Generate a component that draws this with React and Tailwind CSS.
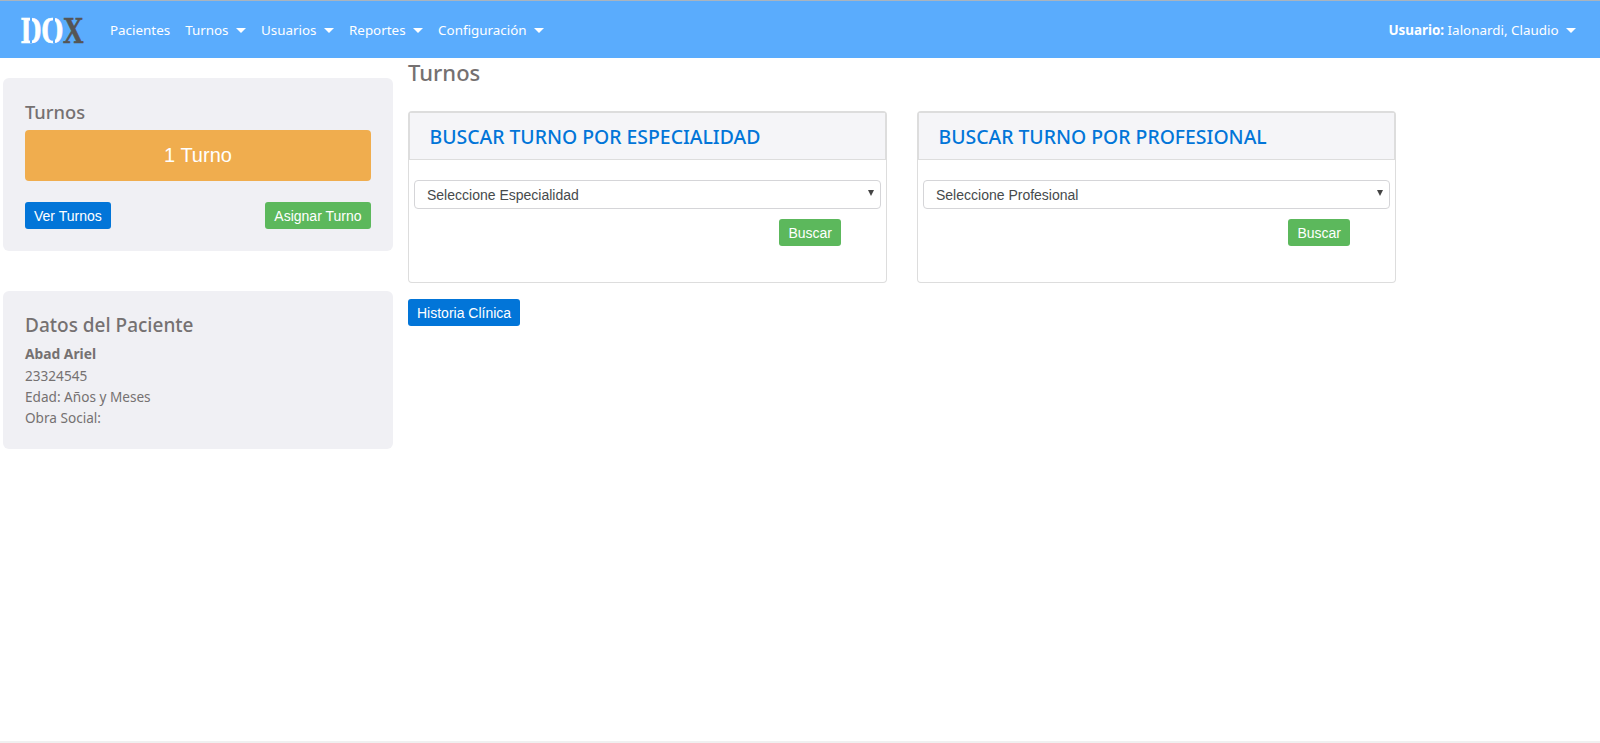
import React from "react";

const sans = "font-['Noto_Sans','Open_Sans',sans-serif]";
const arial = "font-['Liberation_Sans',Arial,sans-serif]";

function Caret() {
  return <span className="ml-[7.5px] inline-block w-0 h-0 border-x-[5px] border-x-transparent border-t-[5px] border-t-white align-middle" />;
}

function NavItem({ label, caret }) {
  return (
    <span className="text-[13.4px] leading-[20px] text-white whitespace-nowrap">
      {label}
      {caret && <Caret />}
    </span>
  );
}

function Btn({ children, color, wide }) {
  return (
    <button className={`${arial} ${color} ${wide ? "px-[9.5px]" : "px-[9px]"} h-[27px] rounded-[3px] text-[14px] leading-[20px] text-white whitespace-nowrap`}>
      {children}
    </button>
  );
}

function SearchPanel({ title, placeholder }) {
  return (
    <section className="w-[479px] h-[172px] rounded-[4px] border border-[#dddddd] border-t-2 bg-white flex flex-col">
      <header className="h-[47px] shrink-0 bg-[#f5f5f8] border-b border-x border-[#dddddd] pl-[19.5px] pt-[2px] flex items-center">
        <h2 className="text-[19.4px] leading-[24px] font-medium text-[#0275d8] whitespace-nowrap">{title}</h2>
      </header>
      <div className="px-[5px] pt-[20px]">
        <div className={`${arial} relative h-[29px] rounded-[4px] border border-[#d5d5d8] flex items-center pl-[12px] pt-[1.5px] text-[14px] text-[#464a4c]`}>
          {placeholder}
          <span className="absolute right-[6px] top-[9px] w-0 h-0 border-x-[3.5px] border-x-transparent border-t-[6px] border-t-[#444444]" />
        </div>
        <div className="flex justify-end pr-[40px] mt-[10px]">
          <Btn color="bg-[#5cb85c]">Buscar</Btn>
        </div>
      </div>
    </section>
  );
}

function Logo() {
  const gap = "absolute w-[1.5px] h-[5px] bg-[#5aacfd]";
  return (
    <span className="relative w-[64px] h-[26px] ml-[1px] mr-[25px] shrink-0">
      <span className="absolute left-0 top-[-7px] font-['Liberation_Serif',serif] font-bold text-[38px] leading-[40px] tracking-[-0.5px] text-white scale-x-[0.75] origin-left whitespace-nowrap [-webkit-text-stroke:0.7px_currentColor]">
        DO<span className="text-[#555555]">X</span>
      </span>
      <span className={`${gap} left-[9px] top-0`} />
      <span className={`${gap} left-[9px] bottom-0`} />
      <span className={`${gap} left-[32px] top-0`} />
      <span className={`${gap} left-[32px] bottom-0`} />
    </span>
  );
}

export default function App() {
  return (
    <div className={`${sans} w-[1600px] h-[743px] bg-white text-[#757171] flex flex-col overflow-hidden`}>
      <nav className="h-[58px] shrink-0 bg-[#5aacfd] border-t border-[#a9b4bf] flex items-center pl-[20px] pr-[24px]">
        <Logo />
        <div className="flex items-center gap-[15px]">
          <NavItem label="Pacientes" />
          <NavItem label="Turnos" caret />
          <NavItem label="Usuarios" caret />
          <NavItem label="Reportes" caret />
          <NavItem label="Configuración" caret />
        </div>
        <span className="ml-auto text-[13.4px] leading-[20px] text-white whitespace-nowrap">
          <b className="font-bold">Usuario:</b> Ialonardi, Claudio
          <Caret />
        </span>
      </nav>

      <div className="flex-1 flex items-start pl-[3px]">
        <aside className="w-[390px] shrink-0 pt-[20px] flex flex-col gap-[40px]">
          <div className="h-[173px] rounded-[6px] bg-[#f0f0f4] px-[22px] pt-[22px]">
            <h3 className="text-[18.3px] leading-[24px] font-medium">Turnos</h3>
            <div className={`${arial} mt-[6px] h-[51px] pb-[2px] rounded-[4px] bg-[#f0ad4e] text-white text-[20px] flex items-center justify-center`}>
              1 Turno
            </div>
            <div className="flex justify-between mt-[21px]">
              <Btn color="bg-[#0275d8]">Ver Turnos</Btn>
              <Btn color="bg-[#5cb85c]" wide>Asignar Turno</Btn>
            </div>
          </div>
          <div className="h-[158px] rounded-[6px] bg-[#f0f0f4] px-[22px] pt-[20px]">
            <h3 className="text-[19px] leading-[28px] font-medium">Datos del Paciente</h3>
            <div className="mt-[4px] text-[13.6px] leading-[21px]">
              <div className="font-bold text-[13.8px] leading-[22px]">Abad Ariel</div>
              <div>23324545</div>
              <div>Edad: Años y Meses</div>
              <div>Obra Social:</div>
            </div>
          </div>
        </aside>

        <main className="ml-[15px] flex flex-col items-start">
          <h1 className="text-[22px] leading-[30px] font-medium mt-[-1px]">Turnos</h1>
          <div className="flex gap-[30px] mt-[24px]">
            <SearchPanel title="BUSCAR TURNO POR ESPECIALIDAD" placeholder="Seleccione Especialidad" />
            <SearchPanel title="BUSCAR TURNO POR PROFESIONAL" placeholder="Seleccione Profesional" />
          </div>
          <div className="mt-[16px]">
            <Btn color="bg-[#0275d8]">Historia Clínica</Btn>
          </div>
        </main>
      </div>

      <div className="h-[2px] shrink-0 bg-[#f0f0f0]" />
    </div>
  );
}
